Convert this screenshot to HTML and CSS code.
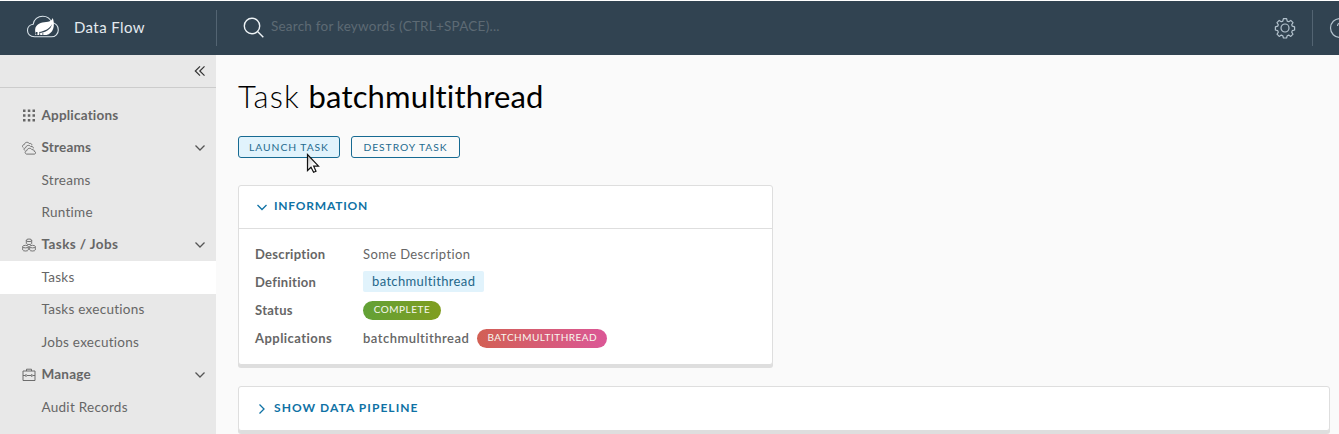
FILE: index.html
```html
<!DOCTYPE html>
<html lang="en">
<head>
<meta charset="utf-8">
<title>Data Flow</title>
<link rel="stylesheet" href="styles.css">
</head>
<body>
<header class="header">
  <div class="brand">
    <svg class="logo" width="34" height="24" viewBox="0 0 34 24">
      <path d="M8.500 21.800C4 21.800 1.500 18.800 1.500 15.500C1.500 12 4.100 9.600 7.200 9.300C7.800 4.500 11.900 1.200 16.700 1.200C20.800 1.200 24.300 3.600 25.700 7.500C29.500 8.200 32.300 11 32.300 14.900C32.300 18.700 29.400 21.800 25.500 21.800Z" fill="none" stroke="#dbe5eb" stroke-width="1.100"/>
      <path d="M26.800 3C26.200 5 24.500 6.200 22 6.700C17 7.500 11.500 7.400 9.500 12.600C8.800 15 9.200 17 9.700 18.500L9 20H20.500C27 18.400 29.500 11.500 26.800 3Z" fill="#fff"/>
      <path d="M13 17C18.500 16.300 24 13.500 26.200 9C24.500 15 19.500 17.600 13.500 17.900" fill="#314351"/>
      <path d="M9.800 17h1.700v2.800H9.800zM13.200 18.300h1v1.700h-1zM16 18.600h1.500v.9H16z" fill="#314351"/>
    </svg>
    <span class="brand-name">Data Flow</span>
  </div>
  <div class="search">
    <svg width="22" height="22" viewBox="0 0 22 22" fill="none" stroke="#eef3f6" stroke-width="1.400"><circle cx="9" cy="9" r="7.700"/><path d="M14.800 14.800L20.300 20.300"/></svg>
    <span class="placeholder">Search for keywords (CTRL+SPACE)...</span>
  </div>
  <div class="settings">
    <svg width="22" height="22" viewBox="0 0 22 22" fill="none" stroke="#b4c3ce" stroke-width="1.200" stroke-linejoin="round"><path d="M9.400 1.700h3.200l.6 2.400 1.500.6 2.100-1.300 2.200 2.200-1.300 2.100.6 1.500 2.300.6v3.200l-2.300.6-.6 1.500 1.300 2.100-2.200 2.200-2.100-1.300-1.500.6-.6 2.300H9.400l-.6-2.300-1.500-.6-2.100 1.300-2.200-2.200 1.300-2.100-.6-1.500-2.300-.6V9.800l2.300-.6.600-1.500L3 5.600l2.200-2.200 2.100 1.300 1.500-.6z"/><circle cx="11" cy="11" r="4"/></svg>
  </div>
  <div class="help">
    <svg width="22" height="22" viewBox="0 0 22 22" fill="none" stroke="#b4c3ce" stroke-width="1.200"><circle cx="11" cy="11" r="9.500"/><path d="M8.500 9C8.800 5 14 5.500 13.500 9c-.3 1.500-2.500 2-2.500 4"/></svg>
  </div>
</header>
<div class="body">
  <nav class="sidebar">
    <div class="collapse">
      <svg width="12" height="12" viewBox="0 0 12 12" fill="none" stroke="#333" stroke-width="1.200"><path d="M6 1.300L1.300 6L6 10.700M10.500 1.300L5.800 6L10.500 10.700"/></svg>
    </div>
    <div class="menu">
      <div class="item group">
        <svg class="icon" width="14" height="14" viewBox="0 0 14 14" fill="#666"><path d="M1 1.500h2.500v2.500H1zM5.800 1.500h2.500v2.500H5.800zM10.500 1.500H13v2.500h-2.500zM1 6.200h2.500v2.500H1zM5.800 6.200h2.500v2.500H5.800zM10.500 6.200H13v2.500h-2.500zM1 11h2.500v2.500H1zM5.800 11h2.500v2.500H5.800zM10.500 11H13v2.500h-2.500z"/></svg>
        <span class="t-applications">Applications</span>
      </div>
      <div class="item group">
        <svg class="icon" width="14" height="14" viewBox="0 0 14 14" fill="none" stroke="#666" stroke-width=".9"><path d="M4.500 13.100C2.500 12.500 2.800 9.900 4.800 9.700C5 7.300 8.500 6.300 10 8.700C11.500 8.300 12.200 9.300 12.100 10.200C14.200 10.500 13.900 13.100 12.300 13.100ZM3 9.600C1.300 8.700 2.200 6.700 3.600 6.800C4 4.300 7.400 3.500 8.800 5.600C10.600 5.100 11.600 6.200 11.300 7.400M1.400 6.800C-.4 5.500.7 3.600 2.100 3.800C2.600 1.200 5.900.4 7.300 2.500C9 2 10.200 3.200 9.700 4.300"/></svg>
        <span class="t-streams">Streams</span>
        <svg class="chevron" width="12" height="8" viewBox="0 0 12 8"><path d="M1.500 1.500L6 6L10.500 1.500"/></svg>
      </div>
      <div class="item sub"><span>Streams</span></div>
      <div class="item sub"><span>Runtime</span></div>
      <div class="item group">
        <svg class="icon" width="14" height="14" viewBox="0 0 14 14" fill="none" stroke="#666" stroke-width=".9"><path d="M4.300 2.300V5.400C4.300 6.900 9.700 6.900 9.700 5.400V2.300M.7 8.800V11.900C.7 13.400 6.300 13.400 6.300 11.900V8.800M7.700 8.800V11.900C7.700 13.400 13.300 13.400 13.300 11.900V8.800"/><ellipse cx="7" cy="2.300" rx="2.700" ry="1.300"/><ellipse cx="3.500" cy="8.600" rx="2.800" ry="1.300"/><ellipse cx="10.500" cy="8.600" rx="2.800" ry="1.300"/></svg>
        <span class="t-tasks">Tasks / Jobs</span>
        <svg class="chevron" width="12" height="8" viewBox="0 0 12 8"><path d="M1.500 1.500L6 6L10.500 1.500"/></svg>
      </div>
      <div class="item sub active"><span>Tasks</span></div>
      <div class="item sub"><span>Tasks executions</span></div>
      <div class="item sub"><span>Jobs executions</span></div>
      <div class="item group">
        <svg class="icon" width="14" height="14" viewBox="0 0 14 14" fill="none" stroke="#666" stroke-width=".95"><path d="M1 3H13V12.500H1ZM4.500 3V1.200H9.500V3M1 7.500H3.500M5 7.500H9M10.500 7.500H13M4 6V9M9.800 6V9"/></svg>
        <span class="t-manage">Manage</span>
        <svg class="chevron" width="12" height="8" viewBox="0 0 12 8"><path d="M1.500 1.500L6 6L10.500 1.500"/></svg>
      </div>
      <div class="item sub"><span>Audit Records</span></div>
      <div class="item sub"><span>Import / Export</span></div>
    </div>
  </nav>
  <main class="content">
    <h1 class="title"><span class="title-kind">Task</span> <span class="title-name">batchmultithread</span></h1>
    <div class="actions">
      <button class="btn launch"><span>LAUNCH TASK</span>
        <svg class="cursor" width="14" height="21" viewBox="0 0 14 21"><defs><linearGradient id="arrow" x1="0" y1="0" x2="1" y2="1"><stop offset="0" stop-color="#bbb"/><stop offset=".6" stop-color="#fff"/></linearGradient></defs><path d="M1.500 1.500V17.500L5 14.200L7.600 19.300L10 18.200L7.700 13.200H12.500Z" fill="url(#arrow)" stroke="#111" stroke-width="1.200"/></svg>
      </button>
      <button class="btn destroy"><span>DESTROY TASK</span></button>
    </div>
    <section class="card information">
      <div class="card-header">
        <svg class="toggle" width="12" height="12" viewBox="0 0 12 12"><path d="M1.500 4L6 8.500L10.500 4"/></svg>
        <span class="t-information">INFORMATION</span>
      </div>
      <div class="details">
        <div class="row"><span class="label l-description">Description</span><span class="value v-description">Some Description</span></div>
        <div class="row"><span class="label l-definition">Definition</span><code class="definition">batchmultithread</code></div>
        <div class="row"><span class="label l-status">Status</span><span class="badge complete">COMPLETE</span></div>
        <div class="row"><span class="label l-applications">Applications</span><span class="app-name">batchmultithread</span><span class="badge app">BATCHMULTITHREAD</span></div>
      </div>
    </section>
    <section class="card pipeline">
      <div class="card-header">
        <svg class="toggle" width="12" height="12" viewBox="0 0 12 12"><path d="M3.500 1.500L8 6L3.500 10.500"/></svg>
        <span class="t-pipeline">SHOW DATA PIPELINE</span>
      </div>
    </section>
  </main>
</div>
</body>
</html>
```
FILE: styles.css
```css
* { box-sizing: border-box; }
body { margin: 0; height: 434px; overflow: hidden; background: #fafafa; color: #666; font: 13px/24px Lato, "Open Sans", sans-serif; }
span, code { white-space: nowrap; }
svg { flex: none; }

.header { display: flex; height: 55px; overflow: hidden; border-top: 1px solid #fff; background: #314351; }
.brand { display: flex; align-items: center; flex: none; width: 216px; padding: 0 0 2px 26px; gap: 14px; }
.brand-name { color: #e4eaef; font-size: 15px; letter-spacing: .4px; }
.search { display: flex; align-items: center; flex: 1; gap: 6px; position: relative; padding: 0 0 2px 27px; }
.search::before, .help::before { content: ""; position: absolute; left: 0; top: 9px; height: 36px; width: 1px; background: #536472; }
.placeholder { padding-bottom: 2px; color: #5d6a74; font-size: 13.5px; letter-spacing: .23px; }
.search svg { margin-top: 1px; }
.settings { display: flex; align-items: center; flex: none; padding-right: 16px; }
.help { display: flex; align-items: center; flex: none; position: relative; width: 27px; padding-left: 17px; }

.body { display: flex; height: 379px; }
.sidebar { flex: none; width: 216px; overflow: hidden; background: #e8e8e8; }
.collapse { display: flex; align-items: center; justify-content: flex-end; height: 33px; padding-right: 10px; border-bottom: 1px solid #ccc; }
.menu { padding-top: 11px; }
.item { display: flex; align-items: center; height: 32.450px; padding-left: 22px; padding-right: 10px; font-size: 13.500px; letter-spacing: .27px; }
.icon { margin-right: 5.500px; }
.group { font-weight: 700; letter-spacing: .2px; }
.t-tasks { letter-spacing: .42px; }
.item > span { padding-bottom: 1px; }
.sub { padding-left: 41.500px; }
.active { background: #fff; }
.chevron { margin-left: auto; fill: none; stroke: #555; stroke-width: 1.300; }

.content { flex: 1; min-width: 0; padding: 22px 9px 0 22px; }
.title { margin: 0; color: #000; font-size: 31px; font-weight: 300; line-height: 38px; letter-spacing: .15px; }
.title-kind { letter-spacing: 1.200px; }
.title-name { font-weight: 400; }
.actions { display: flex; gap: 11px; margin-top: 21px; }
.btn { display: flex; align-items: center; justify-content: center; position: relative; height: 22px; padding: 0; border: 1px solid #176a92; border-radius: 3px; background: transparent; color: #266b8f; font: 10.300px/20px Lato, sans-serif; letter-spacing: .95px; }
.launch { width: 102px; background: #e1f3fc; }
.destroy { width: 109px; }
.cursor { position: absolute; left: 67px; top: 16px; z-index: 2; }

.card { border: 1px solid #dedede; border-radius: 3px; background: #fff; box-shadow: 0 3px 0 #dedede; }
.information { width: 535px; height: 180px; margin-top: 27px; }
.pipeline { height: 45px; margin-top: 21px; }
.card-header { display: flex; align-items: center; gap: 6px; height: 43px; padding-left: 17px; color: #0f72a5; font-size: 12px; font-weight: 700; letter-spacing: 1.050px; }
.card-header span { padding-bottom: 2px; }
.information .card-header { height: 43px; border-bottom: 1px solid #dedede; }
.t-information { letter-spacing: .78px; }
.information .card-header span { padding-bottom: 3px; }
.toggle { fill: none; stroke: #0f72a5; stroke-width: 1.300; }
.details { padding: 10.500px 16px 0; }
.row { display: flex; align-items: center; height: 28.100px; font-size: 13px; letter-spacing: .3px; }
.label { flex: none; width: 108px; font-weight: 700; }
.l-applications { letter-spacing: .45px; }
.v-description { letter-spacing: .38px; }
.definition { height: 21px; padding: 0 9px; border-radius: 2px; background: #e1f3fc; color: #24678a; font: 13px/20px Lato, sans-serif; letter-spacing: .36px; }
.app-name { margin-right: 8px; font-weight: 600; letter-spacing: .48px; }
.badge { position: relative; top: 1px; height: 19px; border-radius: 10px; color: #f7f8ef; font-size: 10px; line-height: 17px; text-align: center; letter-spacing: .5px; }
.complete { width: 78px; background: linear-gradient(90deg, #62a136, #809d20); }
.app { width: 130px; background: linear-gradient(90deg, #d26054, #db5796); }
```
